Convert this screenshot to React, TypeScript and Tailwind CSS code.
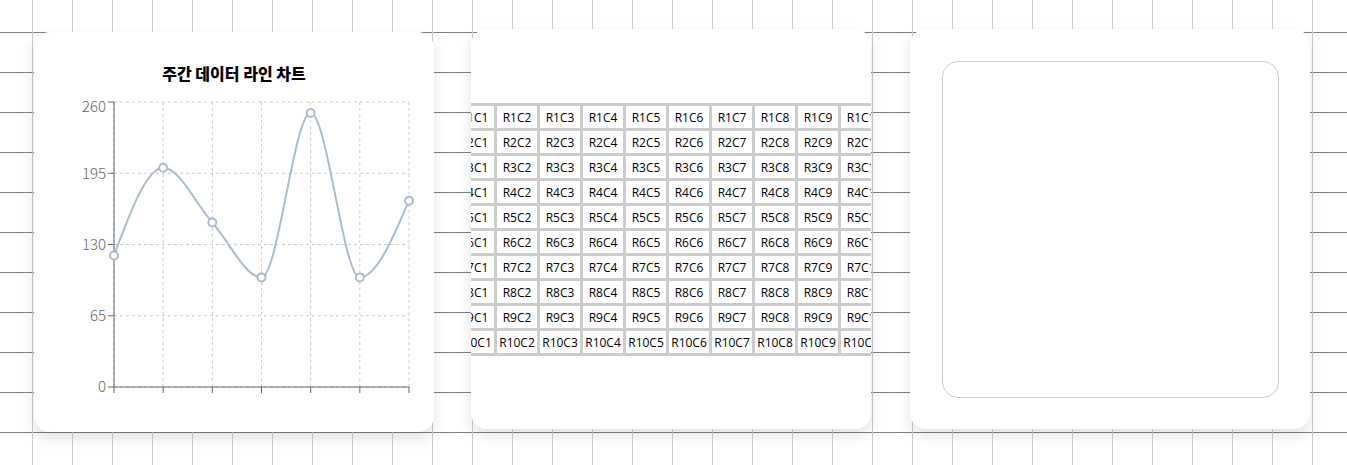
import type { ReactNode } from "react";

const WEEKLY = [120, 200, 150, 100, 250, 100, 170];
const Y_TICKS = [0, 65, 130, 195, 260];
const PLOT = { left: 80, right: 375, top: 16, bottom: 301 };

type Point = { x: number; y: number };

const scaleX = (i: number) =>
  PLOT.left + (i * (PLOT.right - PLOT.left)) / (WEEKLY.length - 1);
const scaleY = (v: number) =>
  PLOT.bottom - (v / 260) * (PLOT.bottom - PLOT.top);

/** Monotone cubic interpolation through the points. */
function monotonePath(pts: Point[]): string {
  const n = pts.length;
  const slope = (i: number) =>
    (pts[i + 1].y - pts[i].y) / (pts[i + 1].x - pts[i].x);
  const t: number[] = new Array(n).fill(0);
  for (let i = 1; i < n - 1; i++) {
    const a = slope(i - 1);
    const b = slope(i);
    const p = (a + b) / 2;
    t[i] =
      (Math.sign(a) + Math.sign(b)) *
      Math.min(Math.abs(a), Math.abs(b), 0.5 * Math.abs(p));
  }
  t[0] = (3 * slope(0) - t[1]) / 2;
  t[n - 1] = (3 * slope(n - 2) - t[n - 2]) / 2;
  let d = `M${pts[0].x},${pts[0].y}`;
  for (let i = 0; i < n - 1; i++) {
    const dx = (pts[i + 1].x - pts[i].x) / 3;
    d += `C${pts[i].x + dx},${pts[i].y + dx * t[i]},${pts[i + 1].x - dx},${
      pts[i + 1].y - dx * t[i + 1]
    },${pts[i + 1].x},${pts[i + 1].y}`;
  }
  return d;
}

function LineChart() {
  const pts = WEEKLY.map((v, i) => ({ x: scaleX(i), y: scaleY(v) }));
  return (
    <svg
      viewBox="0 0 400 346"
      className="block h-auto w-full"
      role="img"
      aria-labelledby="chart-title"
    >
      <g stroke="#ccc" strokeDasharray="3 3">
        {Y_TICKS.map((v) => (
          <line key={v} x1={PLOT.left} x2={PLOT.right} y1={scaleY(v)} y2={scaleY(v)} />
        ))}
        {pts.map((p) => (
          <line key={p.x} x1={p.x} x2={p.x} y1={PLOT.top} y2={PLOT.bottom} />
        ))}
      </g>
      <g stroke="#666">
        <line x1={PLOT.left} x2={PLOT.right} y1={PLOT.bottom} y2={PLOT.bottom} />
        <line x1={PLOT.left} x2={PLOT.left} y1={PLOT.top} y2={PLOT.bottom} />
        {pts.map((p) => (
          <line key={p.x} x1={p.x} x2={p.x} y1={PLOT.bottom} y2={PLOT.bottom + 6} />
        ))}
        {Y_TICKS.map((v) => (
          <line key={v} x1={PLOT.left - 6} x2={PLOT.left} y1={scaleY(v)} y2={scaleY(v)} />
        ))}
      </g>
      <g
        fill="#666"
        textAnchor="end"
        className="font-['Noto_Sans_CJK_KR',sans-serif] text-[15px] font-light"
      >
        {Y_TICKS.map((v) => (
          <text key={v} x={PLOT.left - 8} y={Math.max(scaleY(v), 21)} dy="0.355em">
            {v}
          </text>
        ))}
      </g>
      <path d={monotonePath(pts)} fill="none" stroke="#abbbd0" strokeWidth={2} />
      <g fill="#fff" stroke="#abbbd0" strokeWidth={2}>
        {pts.map((p) => (
          <circle key={p.x} cx={p.x} cy={p.y} r={4} />
        ))}
      </g>
    </svg>
  );
}

function DataGrid() {
  const indices = Array.from({ length: 10 }, (_, i) => i + 1);
  return (
    <table className="shrink-0 table-fixed border-separate border-spacing-[3px] bg-[#ccc] text-xs text-black">
      <colgroup>
        {indices.map((c) => (
          <col key={c} className={c === 10 ? "w-[47px]" : "w-10"} />
        ))}
      </colgroup>
      <tbody>
        {indices.map((r) => (
          <tr key={r}>
            {indices.map((c) => (
              <td key={c} className="bg-white p-0 pt-0.5 text-center leading-5">
                {`R${r}C${c}`}
              </td>
            ))}
          </tr>
        ))}
      </tbody>
    </table>
  );
}

function Card({ className, children }: { className: string; children: ReactNode }) {
  return (
    <section
      className={`aspect-square w-full max-w-[400px] overflow-hidden rounded-2xl bg-white shadow-[0_6px_14px_rgba(0,0,0,0.12)] ${className}`}
    >
      {children}
    </section>
  );
}

export default function App() {
  return (
    <main className="min-h-screen bg-white bg-[linear-gradient(to_right,#ccc_1px,transparent_1px),linear-gradient(to_bottom,#808080_1px,transparent_1px)] bg-size-[40px_40px] bg-position-[32px_32px] pt-[29px] pr-[37px] pl-[34px] font-['Open_Sans','Noto_Sans_CJK_KR',sans-serif]">
      <div className="grid grid-cols-[437fr_439fr_400fr] items-start">
        <Card className="mt-[3px] pt-7">
          <h2
            id="chart-title"
            className="text-center font-['Noto_Sans_CJK_KR',sans-serif] text-base leading-[26px] font-black text-black"
          >
            주간 데이터 라인 차트
          </h2>
          <LineChart />
        </Card>
        <Card className="flex items-center justify-center">
          <DataGrid />
        </Card>
        <Card className="pt-8 pr-[31px] pb-[31px] pl-8">
          <div className="h-full rounded-2xl border border-[#ccc]" />
        </Card>
      </div>
    </main>
  );
}
